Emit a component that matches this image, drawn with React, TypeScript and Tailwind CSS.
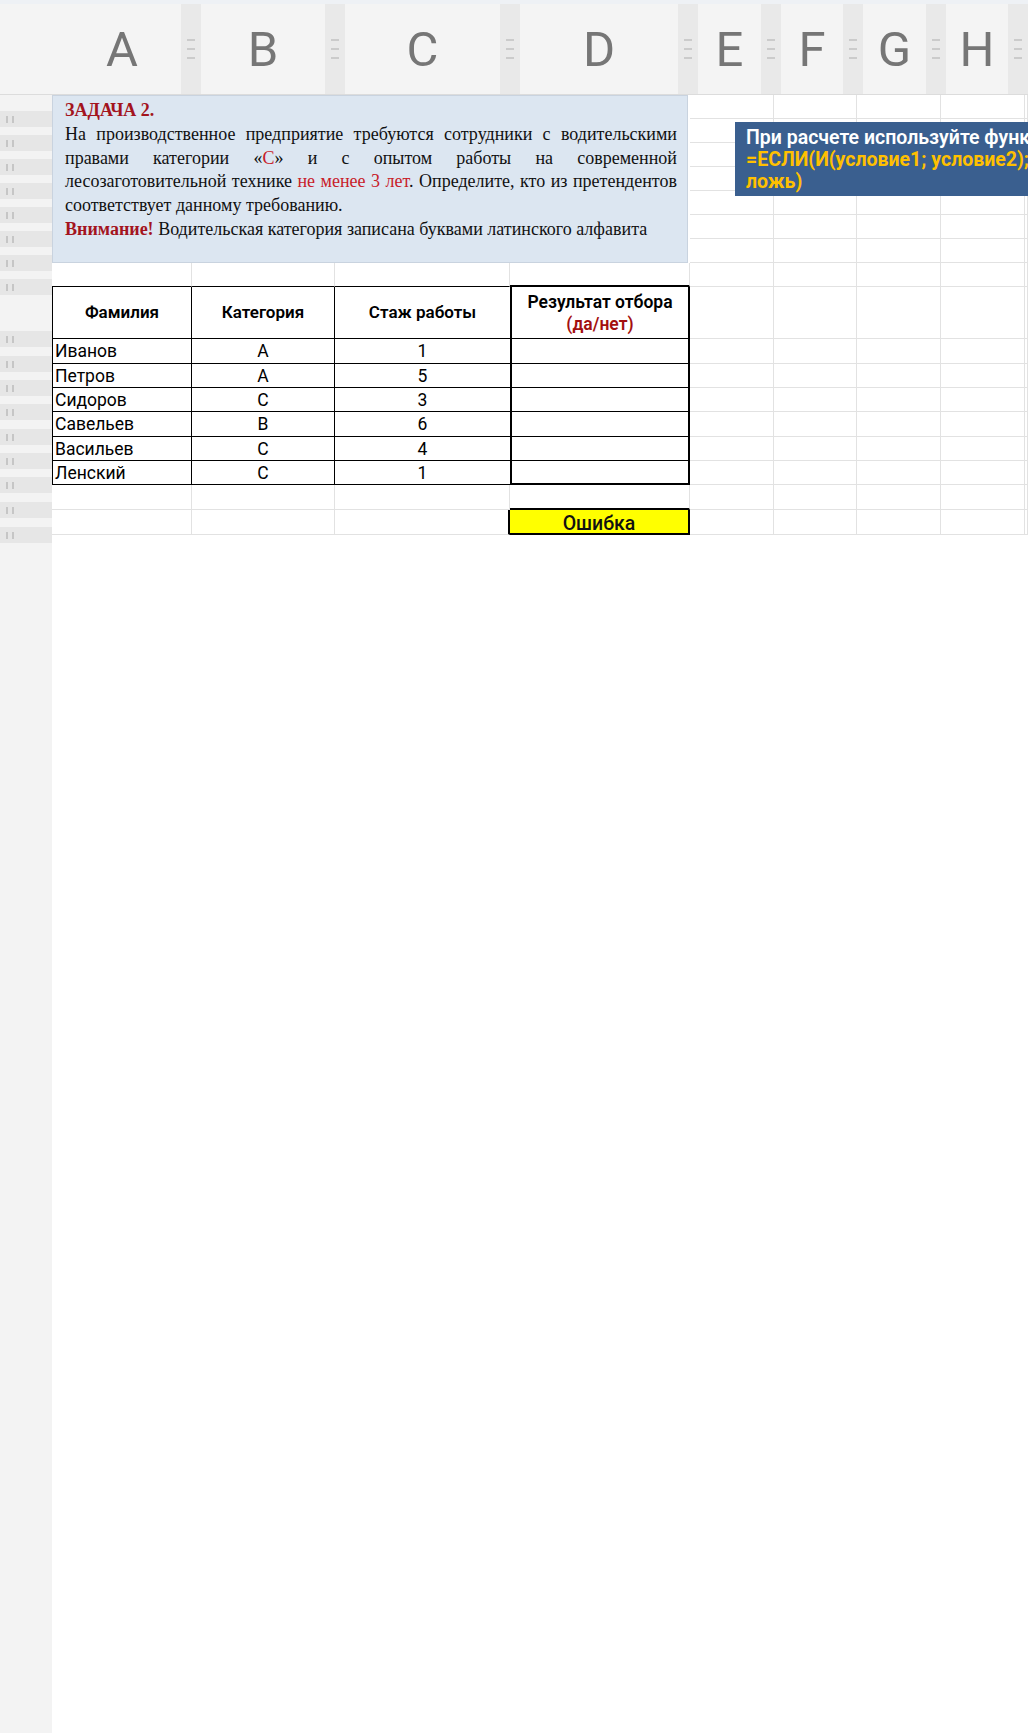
import React from "react";

// column header: letter cells with resize grips between them
const HEAD = [
  { label: "A", w: "w-[118px]" },
  { label: "B", w: "w-[124px]" },
  { label: "C", w: "w-[155px]" },
  { label: "D", w: "w-[158px]" },
  { label: "E", w: "w-[63px]" },
  { label: "F", w: "w-[62px]" },
  { label: "G", w: "w-[63px]" },
  { label: "H", w: "w-[62px]" },
];

const ROW_HEIGHTS = [
  "h-[24px]", "h-[24px]", "h-[24px]", "h-[24px]", "h-[24px]", "h-[24px]", "h-[24px]", "h-[24px]",
  "h-[52px]",
  "h-[25px]", "h-[24px]", "h-[24px]", "h-[25px]", "h-[24px]", "h-[24px]",
  "h-[25px]", "h-[25px]",
];

const PEOPLE = [
  { name: "Иванов", cat: "A", years: 1 },
  { name: "Петров", cat: "A", years: 5 },
  { name: "Сидоров", cat: "C", years: 3 },
  { name: "Савельев", cat: "B", years: 6 },
  { name: "Васильев", cat: "C", years: 4 },
  { name: "Ленский", cat: "C", years: 1 },
];

const GRAY = "border-r border-b border-r-[#e2e2e2] border-b-[#e2e2e2]";

function ColGrip() {
  return (
    <div className="flex w-[20px] shrink-0 flex-col items-center justify-center gap-[7px] bg-[#e9e9e9]">
      <span className="h-[2px] w-[8px] bg-[#cbcbcb]" />
      <span className="h-[2px] w-[8px] bg-[#cbcbcb]" />
      <span className="h-[2px] w-[8px] bg-[#cbcbcb]" />
    </div>
  );
}

function ColumnHeader() {
  return (
    <div className="flex h-[91px] shrink-0 border-b border-[#dcdcdc] bg-[#f4f4f4] font-['Roboto',sans-serif] text-[49px] leading-none text-[#767676]">
      <div className="w-[63px] shrink-0" />
      {HEAD.map((c) => (
        <React.Fragment key={c.label}>
          <div className={`${c.w} flex shrink-0 items-center justify-center`}>{c.label}</div>
          <ColGrip />
        </React.Fragment>
      ))}
    </div>
  );
}

function RowHeaders() {
  return (
    <div className="flex w-[52px] shrink-0 flex-col bg-[#f3f3f3]">
      {ROW_HEIGHTS.map((h, i) => (
        <div key={i} className={`relative shrink-0 ${h}`}>
          <div className="absolute inset-x-0 -bottom-2 z-10 flex h-4 items-center gap-[4px] bg-[#e6e6e6] pl-[6px]">
            <span className="h-[7px] w-[2px] bg-[#c6c6c6]" />
            <span className="h-[7px] w-[2px] bg-[#c6c6c6]" />
          </div>
        </div>
      ))}
    </div>
  );
}

function Blank({ n }: { n: number }) {
  return (
    <>
      {Array.from({ length: n }).map((_, i) => (
        <div key={i} className={GRAY} />
      ))}
    </>
  );
}

function TaskNote() {
  const just = "whitespace-nowrap text-justify [text-align-last:justify]";
  return (
    <div className="col-span-4 row-span-7 mr-[2px] border border-[#c9d3df] bg-[#dce6f1] pl-[12px] pr-[10px] pt-[3px] font-['Liberation_Serif',serif] text-[18px] leading-[23.8px] text-[#111]">
      <p className="font-bold text-[#a3141e]">ЗАДАЧА 2.</p>
      <p className={just}>На производственное предприятие требуются сотрудники с водительскими</p>
      <p className={just}>
        правами категории «<span className="text-[#c8202a]">С</span>» и с опытом работы на современной
      </p>
      <p className={just}>
        лесозаготовительной технике <span className="text-[#c8202a]">не менее 3 лет</span>. Определите, кто из претендентов
      </p>
      <p>соответствует данному требованию.</p>
      <p>
        <span className="font-bold text-[#a3141e]">Внимание!</span> Водительская категория записана буквами латинского алфавита
      </p>
    </div>
  );
}

function Sheet() {
  return (
    <div className="grid flex-1 grid-cols-[140px_143px_175px_180px_84px_83px_84px_84px_1fr] grid-rows-[repeat(8,24px)_52px_25px_24px_24px_25px_24px_24px_25px_25px] content-start font-['Roboto',sans-serif] text-[17.5px] text-black">
      <TaskNote />
      {/* rows 1-7, right of the note */}
      {Array.from({ length: 7 }).map((_, r) => (
        <Blank key={r} n={5} />
      ))}

      {/* row 8: top edge of the table */}
      <div className="border-r border-b border-r-[#e2e2e2] border-b-black" />
      <div className="border-r border-b border-r-[#e2e2e2] border-b-black" />
      <div className="border-r border-b border-r-[#e2e2e2] border-b-black" />
      <div className="border-r border-b-2 border-r-[#e2e2e2] border-b-black" />
      <Blank n={5} />

      {/* row 9: table heading */}
      <div className="flex items-center justify-center border-l border-r border-b border-black text-[17px] font-semibold">Фамилия</div>
      <div className="flex items-center justify-center border-r border-b border-black text-[17px] font-semibold">Категория</div>
      <div className="flex items-center justify-center border-b border-black text-[17px] font-semibold">Стаж работы</div>
      <div className="flex flex-col items-center justify-center border-l-2 border-r-2 border-b border-black text-[17.5px] font-semibold leading-[22px]">
        <span>Результат отбора</span>
        <span className="text-[#a30f0f]">(да/нет)</span>
      </div>
      <Blank n={5} />

      {PEOPLE.map((p, i) => {
        const last = i === PEOPLE.length - 1;
        return (
          <React.Fragment key={p.name}>
            <div className="flex items-center border-l border-r border-b border-black px-[2px] pt-[2px] leading-none">{p.name}</div>
            <div className="flex items-center justify-center border-r border-b border-black pt-[2px] leading-none">{p.cat}</div>
            <div className="flex items-center justify-center border-b border-black pt-[2px] leading-none">{p.years}</div>
            <div className={`border-l-2 border-r-2 border-black ${last ? "border-b-2" : "border-b"}`} />
            <Blank n={5} />
          </React.Fragment>
        );
      })}

      {/* row 16 */}
      <Blank n={3} />
      <div className="border-r border-b-2 border-r-[#e2e2e2] border-b-black" />
      <Blank n={5} />

      {/* row 17: formula result */}
      <Blank n={2} />
      <div className="border-r-2 border-b border-r-black border-b-[#e2e2e2]" />
      <div className="flex items-center justify-center border-r-2 border-b-2 border-black bg-[#ffff00] pt-[4px] text-[19.5px] font-medium leading-none text-[#111]">
        Ошибка
      </div>
      <Blank n={5} />
    </div>
  );
}

export default function App() {
  return (
    <div className="relative flex h-[1733px] w-[1028px] flex-col overflow-hidden bg-white">
      <div className="h-[4px] shrink-0 bg-[#eef1f5]" />
      <ColumnHeader />
      <div className="flex flex-1">
        <RowHeaders />
        <Sheet />
      </div>

      {/* floating hint over columns E-H */}
      <div className="absolute left-[735px] top-[122px] h-[74px] w-[420px] bg-[#3a5f8f] pl-[11px] pt-[5px] font-['Roboto',sans-serif] text-[19.5px] leading-[22px]">
        <p className="whitespace-nowrap font-semibold text-white">При расчете используйте функцию</p>
        <p className="whitespace-nowrap font-bold text-[#ffc000]">=ЕСЛИ(И(условие1; условие2); истина;</p>
        <p className="font-bold text-[#ffc000]">ложь)</p>
      </div>
    </div>
  );
}
